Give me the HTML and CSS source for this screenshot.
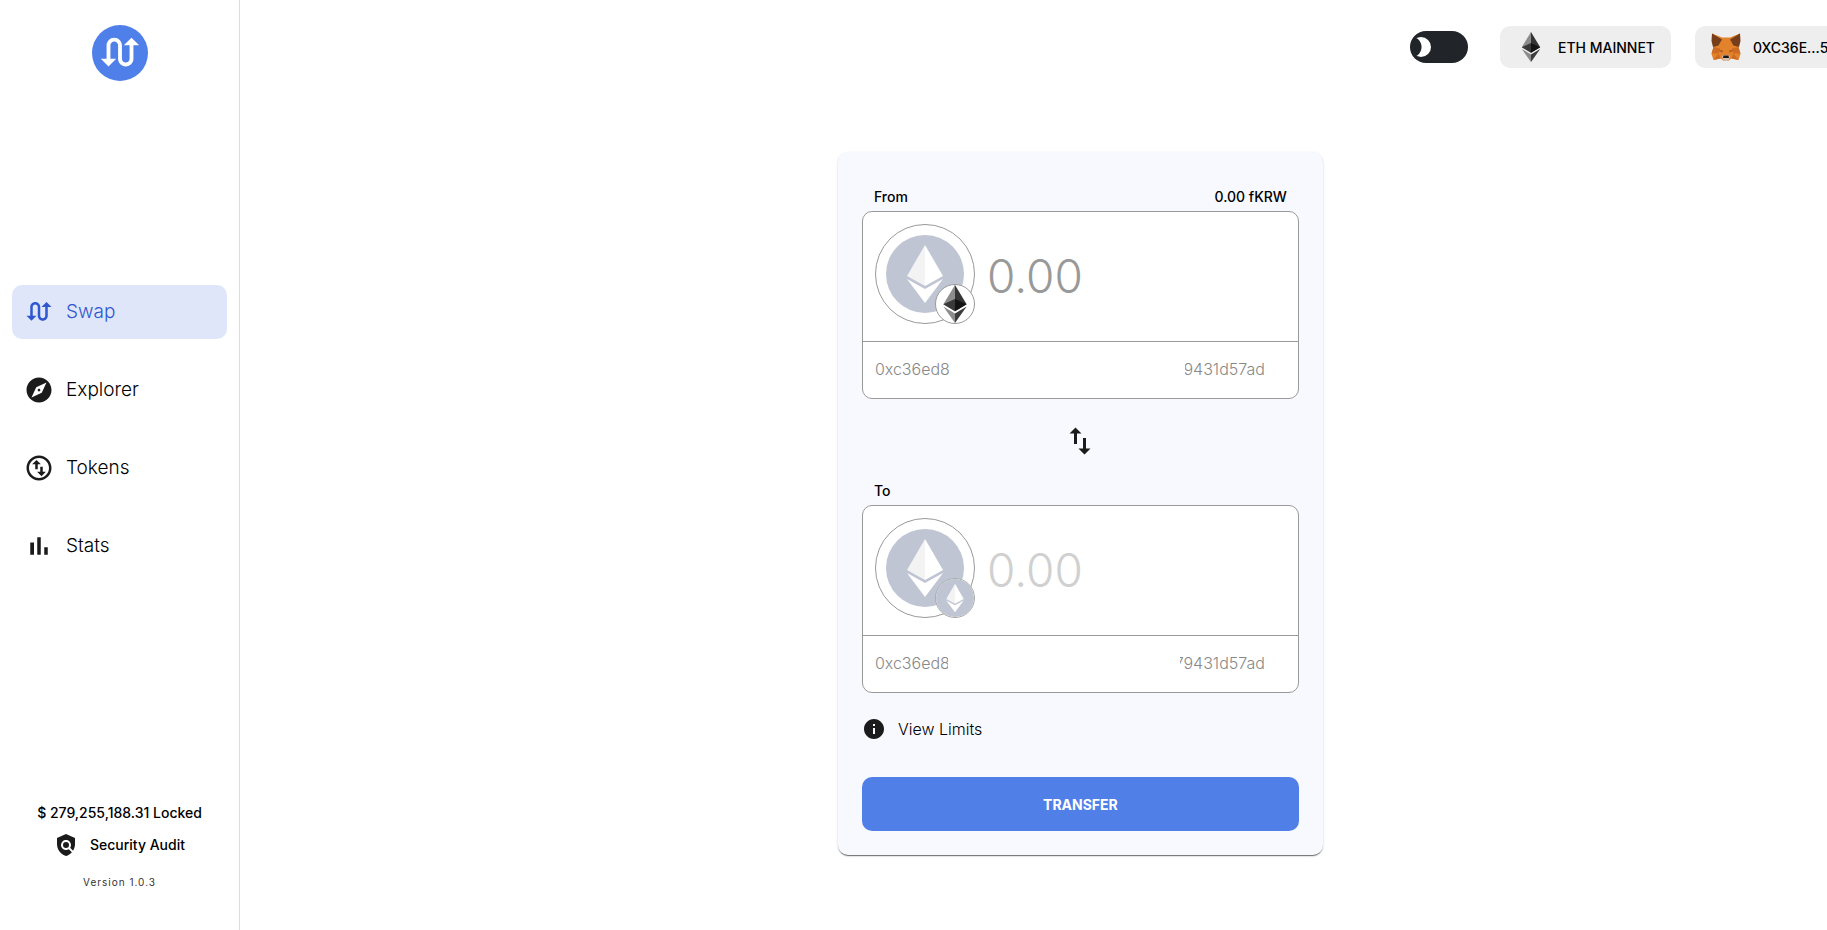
FILE: index.html
```
<!DOCTYPE html>
<html lang="en">

<head>
    <meta charset="UTF-8">
    <meta name="viewport" content="width=device-width, initial-scale=1.0">
    <title>Swap</title>
    <link rel="stylesheet" href="styles.css">
</head>

<body>
    <!-- shared icons -->
    <svg class="sprite" aria-hidden="true">
        <symbol id="swap-calls" viewBox="0 0 24 24">
            <path d="M18 4l-4 4h3v7c0 1.1-.9 2-2 2s-2-.9-2-2V8c0-2.21-1.79-4-4-4S5 5.79 5 8v7H2l4 4 4-4H7V8c0-1.1.9-2 2-2s2 .9 2 2v7c0 2.21 1.79 4 4 4s4-1.79 4-4V8h3l-4-4z" />
        </symbol>
        <symbol id="eth" viewBox="0 0 256 417">
            <path fill="#343434" d="M127.9 0l-2.8 9.5v275.7l2.8 2.8 127.9-75.6z" />
            <path fill="#8c8c8c" d="M127.9 0L0 212.4 127.9 288V154.2z" />
            <path fill="#3c3c3b" d="M127.9 312.2l-1.5 1.9v98.2l1.5 4.5L256 236.6z" />
            <path fill="#8c8c8c" d="M127.9 416.8V312.2L0 236.6z" />
            <path fill="#141414" d="M127.9 288l127.9-75.6-127.9-58.2z" />
            <path fill="#393939" d="M0 212.4L127.9 288V154.2z" />
        </symbol>
        <symbol id="eth-coin" viewBox="0 0 78 78">
            <circle cx="39" cy="39" r="39" fill="#bfc5d3" />
            <path fill="#f3f3f4" d="M39 10L21 41l18 10z" />
            <path fill="#fff" d="M39 10l18 31-18 10z" />
            <path fill="#fff" d="M21 44l18 10 18-10-18 24z" />
        </symbol>
    </svg>

    <div class="layout">
        <aside class="sidebar">
            <a href="#" class="logo" aria-label="Home">
                <svg class="logo-icon"><use href="#swap-calls" /></svg>
            </a>
            <nav class="menu">
                <a href="#swap" class="menu-item active">
                    <svg class="menu-icon"><use href="#swap-calls" /></svg>
                    Swap
                </a>
                <a href="#explorer" class="menu-item">
                    <svg class="menu-icon" viewBox="0 0 24 24">
                        <path d="M12 10.9c-.61 0-1.1.49-1.1 1.1s.49 1.1 1.1 1.1c.61 0 1.1-.49 1.1-1.1s-.49-1.1-1.1-1.1zM12 2C6.48 2 2 6.48 2 12s4.48 10 10 10 10-4.48 10-10S17.52 2 12 2zm2.19 12.19L6 18l3.81-8.19L18 6l-3.81 8.19z" />
                    </svg>
                    Explorer
                </a>
                <a href="#tokens" class="menu-item">
                    <svg class="menu-icon" viewBox="0 0 24 24">
                        <path d="M12 2C6.48 2 2 6.48 2 12s4.48 10 10 10 10-4.48 10-10S17.52 2 12 2zm0 18c-4.41 0-8-3.59-8-8s3.59-8 8-8 8 3.59 8 8-3.59 8-8 8zM6.5 9L10 5.5 13.5 9H11v4H9V9H6.5zm11 6L14 18.5 10.5 15H13v-4h2v4h2.5z" />
                    </svg>
                    Tokens
                </a>
                <a href="#stats" class="menu-item">
                    <svg class="menu-icon" viewBox="0 0 24 24">
                        <path d="M5 9.2h3V19H5zM10.6 5h2.8v14h-2.8zm5.6 8H19v6h-2.8z" />
                    </svg>
                    Stats
                </a>
            </nav>
            <div class="side-footer">
                <p class="locked">$ 279,255,188.31 Locked</p>
                <a href="#audit" class="audit">
                    <svg class="small-icon" viewBox="0 0 24 24">
                        <path d="M21 5l-9-4-9 4v6c0 5.55 3.84 10.74 9 12 2.3-.56 4.33-1.9 5.88-3.71l-3.12-3.12c-1.94 1.29-4.58 1.07-6.29-.64-1.95-1.95-1.95-5.12 0-7.07 1.95-1.95 5.12-1.95 7.07 0 1.71 1.71 1.92 4.35.64 6.29l2.9 2.9C20.29 15.69 21 13.38 21 11V5z" />
                        <circle cx="12" cy="12" r="3" />
                    </svg>
                    Security Audit
                </a>
                <p class="version">Version 1.0.3</p>
            </div>
        </aside>

        <div class="content">
            <header class="topbar">
                <input type="checkbox" class="theme-switch" aria-label="Dark mode">
                <button type="button" class="chip network">
                    <svg class="chip-icon"><use href="#eth" /></svg>
                    ETH MAINNET
                </button>
                <button type="button" class="chip wallet">
                    <svg class="chip-icon" viewBox="0 0 60 56">
                        <path fill="#e2822b" d="M2 1l20 8h16l20-8-3 27 4 14-4 12-14-3-7 5h-8l-7-5-14 3L1 42l4-14z" />
                        <path fill="#cd6b24" d="M5 28l13 3-3 10H1zM55 28l-13 3 3 10h14zM15 41l-10 13 14-3zM45 41l10 13-14-3z" />
                        <path fill="#763e1a" d="M2 1l20 12-7 12-11 3-3-12zM58 1L38 13l7 12 11 3 3-12z" />
                        <path fill="#b85c20" d="M15 33l9 2-1 4-6-2zM45 33l-9 2 1 4 6-2z" />
                        <path fill="#d5bfb2" d="M22 46l4-2h8l4 2-2 8-4 2h-4l-4-2z" />
                        <path fill="#1d1714" d="M25 45h10l1 5H24z" />
                    </svg>
                    0XC36E...57AD
                </button>
            </header>

            <main>
                <form class="card">
                    <div class="field-label">
                        <label for="from-amount">From</label>
                        <span>0.00 fKRW</span>
                    </div>
                    <div class="field">
                        <div class="amount-row">
                            <button type="button" class="token" aria-label="Select token">
                                <svg class="token-icon"><use href="#eth-coin" /></svg>
                                <span class="badge"><svg class="badge-icon"><use href="#eth" /></svg></span>
                            </button>
                            <input type="text" id="from-amount" class="amount" placeholder="0.00">
                        </div>
                        <div class="address">
                            <span>0xc36ed8</span>
                            <span class="address-end">9431d57ad</span>
                        </div>
                    </div>

                    <button type="button" class="flip" aria-label="Switch direction">
                        <svg class="flip-icon" viewBox="0 0 24 24">
                            <path d="M16 17.01V10h-2v7.01h-3L15 21l4-3.99h-3zM9 3L5 6.99h3V14h2V6.99h3L9 3z" />
                        </svg>
                    </button>

                    <div class="field-label">
                        <label for="to-amount">To</label>
                    </div>
                    <div class="field">
                        <div class="amount-row">
                            <button type="button" class="token" aria-label="Select token">
                                <svg class="token-icon"><use href="#eth-coin" /></svg>
                                <span class="badge badge-empty"><svg class="badge-icon"><use href="#eth-coin" /></svg></span>
                            </button>
                            <input type="text" id="to-amount" class="amount" placeholder="0.00" disabled>
                        </div>
                        <div class="address">
                            <span class="address-start">0xc36ed8</span>
                            <span class="address-end wide">79431d57ad</span>
                        </div>
                    </div>

                    <button type="button" class="limits">
                        <svg class="small-icon" viewBox="0 0 24 24">
                            <path d="M12 2C6.48 2 2 6.48 2 12s4.48 10 10 10 10-4.48 10-10S17.52 2 12 2zm1 15h-2v-6h2v6zm0-8h-2V7h2v2z" />
                        </svg>
                        View Limits
                    </button>
                    <button type="submit" class="transfer">TRANSFER</button>
                </form>
            </main>
        </div>
    </div>
</body>

</html>
```
FILE: styles.css
```
* {
    box-sizing: border-box;
}

body {
    margin: 0;
    background-color: #fff;
    color: #000;
    font-family: Inter, "Liberation Sans", sans-serif;
    font-size: 14px;
    font-weight: 500;
    line-height: 20px;
    overflow-x: hidden;
}

button,
input {
    font-family: inherit;
    color: inherit;
    border: none;
    margin: 0;
    padding: 0;
    background: none;
}

button {
    cursor: pointer;
}

a {
    color: inherit;
    text-decoration: none;
}

p {
    margin: 0;
}

svg {
    display: block;
    flex-shrink: 0;
    fill: #1b1b1b;
}

.sprite {
    position: absolute;
    width: 0;
    height: 0;
}

.layout {
    display: flex;
    min-height: 100vh;
}

/* sidebar */
.sidebar {
    display: flex;
    flex-direction: column;
    justify-content: space-between;
    align-items: center;
    flex-shrink: 0;
    width: 240px;
    padding: 25px 12px 38px;
    border-right: 1px solid #dcdcdc;
}

.logo {
    display: flex;
    align-items: center;
    justify-content: center;
    width: 56px;
    height: 56px;
    margin-bottom: -26px;
    border-radius: 50%;
    background-color: #4f7fe8;
}

.logo-icon {
    width: 46px;
    height: 46px;
    fill: #fff;
}

.menu {
    display: flex;
    flex-direction: column;
    gap: 24px;
    width: 100%;
}

.menu-item {
    display: flex;
    align-items: center;
    gap: 12px;
    height: 54px;
    padding: 0 12px;
    border-radius: 10px;
    font-size: 19px;
    font-weight: 300;
}

.menu-icon {
    width: 30px;
    height: 30px;
}

.active {
    background-color: #dfe6fa;
    color: #3056d0;
}

.active .menu-icon {
    fill: #3056d0;
}

.side-footer {
    display: flex;
    flex-direction: column;
    align-items: center;
}

.audit {
    display: flex;
    align-items: center;
    gap: 12px;
    margin: 10px 0 15px;
}

.small-icon {
    width: 24px;
    height: 24px;
}

.version {
    font-size: 10px;
    font-weight: 400;
    letter-spacing: 1px;
    color: #333;
}

/* content is wider than the room beside the sidebar */
.content {
    flex-shrink: 0;
    width: 92vw;
}

.topbar {
    display: flex;
    align-items: center;
    justify-content: flex-end;
    height: 94px;
    padding-right: 50px;
}

.theme-switch {
    appearance: none;
    display: flex;
    align-items: center;
    width: 58px;
    height: 32px;
    margin-right: 32px;
    padding-left: 1px;
    border-radius: 16px;
    background-color: #212529;
}

.theme-switch::before {
    content: "";
    width: 20px;
    height: 20px;
    border-radius: 50%;
    background: radial-gradient(circle at 0 10px, #212529 10px, #fff 11px);
}

.chip {
    display: flex;
    align-items: center;
    gap: 12px;
    height: 42px;
    padding: 0 16px;
    border-radius: 10px;
    background-color: #eee;
    font-size: 14px;
    font-weight: 500;
}

.chip-icon {
    width: 30px;
    height: 30px;
}

.network {
    margin-right: 24px;
}

/* swap card */
.card {
    width: 485px;
    margin: 58px auto 75px;
    padding: 35px 24px 24px;
    border-radius: 10px;
    background-color: #f8f9fe;
    box-shadow: 0 2px 1px -1px rgba(0, 0, 0, 0.4), 0 1px 1px rgba(0, 0, 0, 0.2), 0 1px 3px rgba(0, 0, 0, 0.12);
}

.field-label {
    display: flex;
    justify-content: space-between;
    padding: 0 12px 4px;
}

.field {
    height: 188px;
    border: 1px solid #999;
    border-radius: 10px;
    background-color: #fff;
}

.amount-row {
    display: flex;
    height: 130px;
    padding: 12px;
    border-bottom: 1px solid #999;
}

.token {
    position: relative;
    display: flex;
    align-items: center;
    justify-content: center;
    flex-shrink: 0;
    width: 100px;
    height: 100px;
    border: 1px solid #999;
    border-radius: 50%;
}

.token-icon {
    width: 78px;
    height: 78px;
}

.badge {
    position: absolute;
    right: -1px;
    bottom: -1px;
    display: flex;
    align-items: center;
    justify-content: center;
    width: 40px;
    height: 40px;
    border: 1px solid #999;
    border-radius: 50%;
    background-color: #fff;
}

.badge-empty {
    border-color: #aaa;
}

.badge-icon {
    width: 38px;
    height: 38px;
}

.amount {
    flex: 1;
    min-width: 0;
    height: 104px;
    padding-left: 12px;
    font-size: 46px;
    font-weight: 300;
    outline: none;
}

.amount::placeholder {
    color: #999;
}

.amount:disabled::placeholder {
    color: #d0d0d0;
}

.address {
    display: flex;
    align-items: center;
    justify-content: space-between;
    height: 54px;
    padding: 0 33px 0 12px;
    font-size: 16px;
    font-weight: 300;
    color: #888;
}

.address-start {
    width: 73px;
    overflow: hidden;
}

/* keeps the tail of the address, cut on the left */
.address-end {
    display: flex;
    justify-content: flex-end;
    width: 80px;
    overflow: hidden;
}

.wide {
    width: 85px;
}

.flip {
    display: block;
    margin: 24px auto 22px;
}

.flip-icon {
    width: 36px;
    height: 36px;
}

.limits {
    display: flex;
    align-items: center;
    gap: 12px;
    margin: 24px 0 36px;
    font-size: 16px;
    font-weight: 300;
}

.transfer {
    display: block;
    width: 100%;
    height: 54px;
    border-radius: 10px;
    background-color: #507fe8;
    color: #fff;
    font-size: 14px;
    font-weight: 700;
}
```
